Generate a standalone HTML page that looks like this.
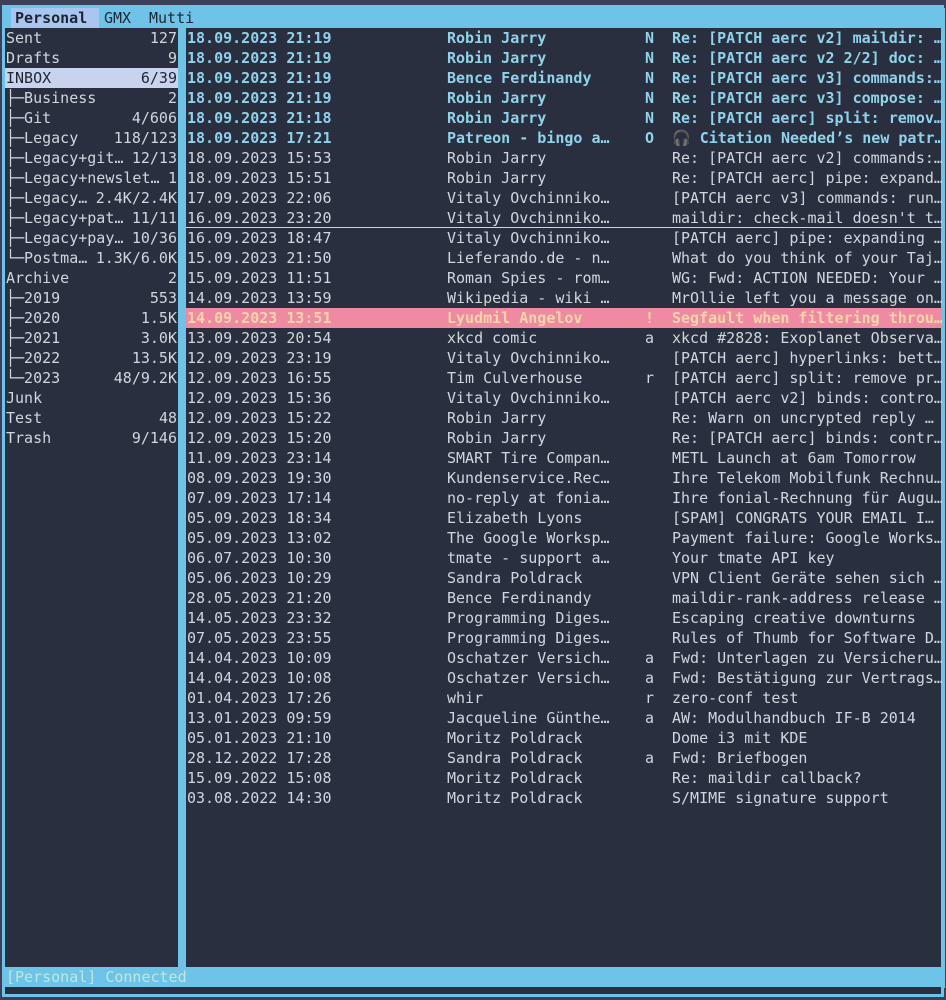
<!DOCTYPE html>
<html><head><meta charset="utf-8"><style>
*{margin:0;padding:0;box-sizing:border-box}
body{width:946px;height:1000px;background:#3a4058;overflow:hidden;position:relative;font-family:"DejaVu Sans Mono","Liberation Mono",monospace;font-size:15px;color:#cfd6de}
.frame{position:absolute;left:2px;top:5px;width:942px;height:992px;border:3px solid #6ec4e8;background:#2a2f3f}
.tabs{position:absolute;left:5px;top:8px;width:937px;height:20px;background:#6ec4e8;color:#1f2433;line-height:20px}
.tabs span{position:absolute;top:0}
.t1{left:6px;width:88px;background:#a8c6f0;font-weight:bold;padding-left:4px}
.side{position:absolute;left:5px;top:28px;width:173px;height:939px}
.sep{position:absolute;left:178px;top:28px;width:8px;height:939px;background:#6ec4e8}
.rbar{position:absolute;left:942px;top:8px;width:3px;height:980px;background:#6ec4e8}
.status{position:absolute;left:5px;top:967px;width:938px;height:20px;background:#6ec4e8;color:#bfe8d8;line-height:20px;padding-left:1px}
.s{position:absolute;left:0;width:173px;height:20px;line-height:20px;white-space:pre}
.s .n{position:absolute;left:1px}
.s .c{position:absolute;right:1px}
.sel{background:#c8d4ee;color:#1f2433}
.list{position:absolute;left:186px;top:28px;width:756px;height:939px;overflow:hidden}
.r{position:absolute;left:0;width:756px;height:20px;line-height:20px;white-space:pre;overflow:hidden}
.r span{position:absolute;top:0}
.d{left:1px}.f{left:261px}.g{left:459px}.j{left:486px}
.u{color:#8fd3ea;font-weight:bold}
.p{background:#f08aa3;color:#fdd7a8;font-weight:bold}
.ul{border-bottom:1px solid #cfd6de}
</style></head><body>
<div class="frame"></div>
<div class="tabs"><span class="t1">Personal</span><span style="left:99px">GMX</span><span style="left:144px">Mutti</span></div>
<div class="side">
<div class="s" style="top:0"><span class="n">Sent</span><span class="c">127</span></div>
<div class="s" style="top:20px"><span class="n">Drafts</span><span class="c">9</span></div>
<div class="s sel" style="top:40px"><span class="n">INBOX</span><span class="c">6/39</span></div>
<div class="s" style="top:60px"><span class="n">├─Business</span><span class="c">2</span></div>
<div class="s" style="top:80px"><span class="n">├─Git</span><span class="c">4/606</span></div>
<div class="s" style="top:100px"><span class="n">├─Legacy</span><span class="c">118/123</span></div>
<div class="s" style="top:120px"><span class="n">├─Legacy+git…</span><span class="c">12/13</span></div>
<div class="s" style="top:140px"><span class="n">├─Legacy+newslet…</span><span class="c">1</span></div>
<div class="s" style="top:160px"><span class="n">├─Legacy…</span><span class="c">2.4K/2.4K</span></div>
<div class="s" style="top:180px"><span class="n">├─Legacy+pat…</span><span class="c">11/11</span></div>
<div class="s" style="top:200px"><span class="n">├─Legacy+pay…</span><span class="c">10/36</span></div>
<div class="s" style="top:220px"><span class="n">└─Postma…</span><span class="c">1.3K/6.0K</span></div>
<div class="s" style="top:240px"><span class="n">Archive</span><span class="c">2</span></div>
<div class="s" style="top:260px"><span class="n">├─2019</span><span class="c">553</span></div>
<div class="s" style="top:280px"><span class="n">├─2020</span><span class="c">1.5K</span></div>
<div class="s" style="top:300px"><span class="n">├─2021</span><span class="c">3.0K</span></div>
<div class="s" style="top:320px"><span class="n">├─2022</span><span class="c">13.5K</span></div>
<div class="s" style="top:340px"><span class="n">└─2023</span><span class="c">48/9.2K</span></div>
<div class="s" style="top:360px"><span class="n">Junk</span></div>
<div class="s" style="top:380px"><span class="n">Test</span><span class="c">48</span></div>
<div class="s" style="top:400px"><span class="n">Trash</span><span class="c">9/146</span></div>
</div>
<div class="sep"></div>
<div class="list">
<div class="r u" style="top:0"><span class="d">18.09.2023 21:19</span><span class="f">Robin Jarry</span><span class="g">N</span><span class="j">Re: [PATCH aerc v2] maildir: …</span></div>
<div class="r u" style="top:20px"><span class="d">18.09.2023 21:19</span><span class="f">Robin Jarry</span><span class="g">N</span><span class="j">Re: [PATCH aerc v2 2/2] doc: …</span></div>
<div class="r u" style="top:40px"><span class="d">18.09.2023 21:19</span><span class="f">Bence Ferdinandy</span><span class="g">N</span><span class="j">Re: [PATCH aerc v3] commands:…</span></div>
<div class="r u" style="top:60px"><span class="d">18.09.2023 21:19</span><span class="f">Robin Jarry</span><span class="g">N</span><span class="j">Re: [PATCH aerc v3] compose: …</span></div>
<div class="r u" style="top:80px"><span class="d">18.09.2023 21:18</span><span class="f">Robin Jarry</span><span class="g">N</span><span class="j">Re: [PATCH aerc] split: remov…</span></div>
<div class="r u" style="top:100px"><span class="d">18.09.2023 17:21</span><span class="f">Patreon - bingo a…</span><span class="g">O</span><span class="j">🎧 Citation Needed’s new patr…</span></div>
<div class="r" style="top:120px"><span class="d">18.09.2023 15:53</span><span class="f">Robin Jarry</span><span class="j">Re: [PATCH aerc v2] commands:…</span></div>
<div class="r" style="top:140px"><span class="d">18.09.2023 15:51</span><span class="f">Robin Jarry</span><span class="j">Re: [PATCH aerc] pipe: expand…</span></div>
<div class="r" style="top:160px"><span class="d">17.09.2023 22:06</span><span class="f">Vitaly Ovchinniko…</span><span class="j">[PATCH aerc v3] commands: run…</span></div>
<div class="r ul" style="top:180px"><span class="d">16.09.2023 23:20</span><span class="f">Vitaly Ovchinniko…</span><span class="j">maildir: check-mail doesn't t…</span></div>
<div class="r" style="top:200px"><span class="d">16.09.2023 18:47</span><span class="f">Vitaly Ovchinniko…</span><span class="j">[PATCH aerc] pipe: expanding …</span></div>
<div class="r" style="top:220px"><span class="d">15.09.2023 21:50</span><span class="f">Lieferando.de - n…</span><span class="j">What do you think of your Taj…</span></div>
<div class="r" style="top:240px"><span class="d">15.09.2023 11:51</span><span class="f">Roman Spies - rom…</span><span class="j">WG: Fwd: ACTION NEEDED: Your …</span></div>
<div class="r" style="top:260px"><span class="d">14.09.2023 13:59</span><span class="f">Wikipedia - wiki …</span><span class="j">MrOllie left you a message on…</span></div>
<div class="r p" style="top:280px"><span class="d">14.09.2023 13:51</span><span class="f">Lyudmil Angelov</span><span class="g">!</span><span class="j">Segfault when filtering throu…</span></div>
<div class="r" style="top:300px"><span class="d">13.09.2023 20:54</span><span class="f">xkcd comic</span><span class="g">a</span><span class="j">xkcd #2828: Exoplanet Observa…</span></div>
<div class="r" style="top:320px"><span class="d">12.09.2023 23:19</span><span class="f">Vitaly Ovchinniko…</span><span class="j">[PATCH aerc] hyperlinks: bett…</span></div>
<div class="r" style="top:340px"><span class="d">12.09.2023 16:55</span><span class="f">Tim Culverhouse</span><span class="g">r</span><span class="j">[PATCH aerc] split: remove pr…</span></div>
<div class="r" style="top:360px"><span class="d">12.09.2023 15:36</span><span class="f">Vitaly Ovchinniko…</span><span class="j">[PATCH aerc v2] binds: contro…</span></div>
<div class="r" style="top:380px"><span class="d">12.09.2023 15:22</span><span class="f">Robin Jarry</span><span class="j">Re: Warn on uncrypted reply …</span></div>
<div class="r" style="top:400px"><span class="d">12.09.2023 15:20</span><span class="f">Robin Jarry</span><span class="j">Re: [PATCH aerc] binds: contr…</span></div>
<div class="r" style="top:420px"><span class="d">11.09.2023 23:14</span><span class="f">SMART Tire Compan…</span><span class="j">METL Launch at 6am Tomorrow</span></div>
<div class="r" style="top:440px"><span class="d">08.09.2023 19:30</span><span class="f">Kundenservice.Rec…</span><span class="j">Ihre Telekom Mobilfunk Rechnu…</span></div>
<div class="r" style="top:460px"><span class="d">07.09.2023 17:14</span><span class="f">no-reply at fonia…</span><span class="j">Ihre fonial-Rechnung für Augu…</span></div>
<div class="r" style="top:480px"><span class="d">05.09.2023 18:34</span><span class="f">Elizabeth Lyons</span><span class="j">[SPAM] CONGRATS YOUR EMAIL I…</span></div>
<div class="r" style="top:500px"><span class="d">05.09.2023 13:02</span><span class="f">The Google Worksp…</span><span class="j">Payment failure: Google Works…</span></div>
<div class="r" style="top:520px"><span class="d">06.07.2023 10:30</span><span class="f">tmate - support a…</span><span class="j">Your tmate API key</span></div>
<div class="r" style="top:540px"><span class="d">05.06.2023 10:29</span><span class="f">Sandra Poldrack</span><span class="j">VPN Client Geräte sehen sich …</span></div>
<div class="r" style="top:560px"><span class="d">28.05.2023 21:20</span><span class="f">Bence Ferdinandy</span><span class="j">maildir-rank-address release …</span></div>
<div class="r" style="top:580px"><span class="d">14.05.2023 23:32</span><span class="f">Programming Diges…</span><span class="j">Escaping creative downturns</span></div>
<div class="r" style="top:600px"><span class="d">07.05.2023 23:55</span><span class="f">Programming Diges…</span><span class="j">Rules of Thumb for Software D…</span></div>
<div class="r" style="top:620px"><span class="d">14.04.2023 10:09</span><span class="f">Oschatzer Versich…</span><span class="g">a</span><span class="j">Fwd: Unterlagen zu Versicheru…</span></div>
<div class="r" style="top:640px"><span class="d">14.04.2023 10:08</span><span class="f">Oschatzer Versich…</span><span class="g">a</span><span class="j">Fwd: Bestätigung zur Vertrags…</span></div>
<div class="r" style="top:660px"><span class="d">01.04.2023 17:26</span><span class="f">whir</span><span class="g">r</span><span class="j">zero-conf test</span></div>
<div class="r" style="top:680px"><span class="d">13.01.2023 09:59</span><span class="f">Jacqueline Günthe…</span><span class="g">a</span><span class="j">AW: Modulhandbuch IF-B 2014</span></div>
<div class="r" style="top:700px"><span class="d">05.01.2023 21:10</span><span class="f">Moritz Poldrack</span><span class="j">Dome i3 mit KDE</span></div>
<div class="r" style="top:720px"><span class="d">28.12.2022 17:28</span><span class="f">Sandra Poldrack</span><span class="g">a</span><span class="j">Fwd: Briefbogen</span></div>
<div class="r" style="top:740px"><span class="d">15.09.2022 15:08</span><span class="f">Moritz Poldrack</span><span class="j">Re: maildir callback?</span></div>
<div class="r" style="top:760px"><span class="d">03.08.2022 14:30</span><span class="f">Moritz Poldrack</span><span class="j">S/MIME signature support</span></div>
</div>
<div class="rbar"></div>
<div class="status">[Personal] Connected</div>
</body></html>
